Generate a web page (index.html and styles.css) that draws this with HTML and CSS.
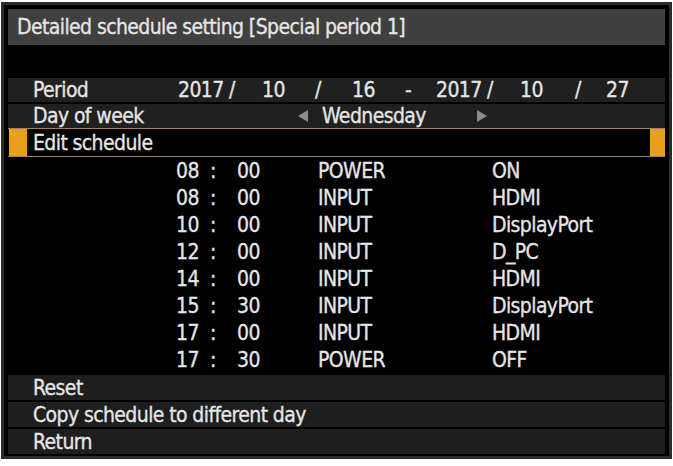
FILE: index.html
```html
<!DOCTYPE html>
<html lang="en">
<head>
<meta charset="utf-8">
<title>Detailed schedule setting</title>
<link rel="stylesheet" href="styles.css">
</head>
<body>
<div class="screen">
  <div class="title">Detailed schedule setting [Special period 1]</div>

  <div class="menu">
    <div class="row period">
      <span class="label">Period</span>
      <span>2017 /</span>
      <span>10</span>
      <span>/</span>
      <span>16</span>
      <span>-</span>
      <span>2017 /</span>
      <span>10</span>
      <span>/</span>
      <span>27</span>
    </div>

    <div class="row day">
      <span class="label">Day of week</span>
      <svg class="arrow" width="10" height="12" viewBox="0 0 10 12"><polygon points="10,0 10,12 0,6"/></svg>
      <span>Wednesday</span>
      <svg class="arrow" width="10" height="12" viewBox="0 0 10 12"><polygon points="0,0 0,12 10,6"/></svg>
    </div>

    <div class="row edit">
      <span class="mark"></span>
      <span class="label">Edit schedule</span>
      <span class="mark mark-right"></span>
    </div>

    <div class="schedule">
      <div class="slot"><span>08</span><span>:</span><span>00</span><span>POWER</span><span>ON</span></div>
      <div class="slot"><span>08</span><span>:</span><span>00</span><span>INPUT</span><span>HDMI</span></div>
      <div class="slot"><span>10</span><span>:</span><span>00</span><span>INPUT</span><span>DisplayPort</span></div>
      <div class="slot"><span>12</span><span>:</span><span>00</span><span>INPUT</span><span>D_PC</span></div>
      <div class="slot"><span>14</span><span>:</span><span>00</span><span>INPUT</span><span>HDMI</span></div>
      <div class="slot"><span>15</span><span>:</span><span>30</span><span>INPUT</span><span>DisplayPort</span></div>
      <div class="slot"><span>17</span><span>:</span><span>00</span><span>INPUT</span><span>HDMI</span></div>
      <div class="slot"><span>17</span><span>:</span><span>30</span><span>POWER</span><span>OFF</span></div>
    </div>

    <div class="row action first"><span class="label">Reset</span></div>
    <div class="row action"><span class="label">Copy schedule to different day</span></div>
    <div class="row action"><span class="label">Return</span></div>
  </div>
</div>
</body>
</html>
```

FILE: styles.css
```css
html, body {
  margin: 0;
  padding: 0;
  background: #ffffff;
}

body {
  font-family: "DejaVu Sans Condensed", "DejaVu Sans", sans-serif;
  font-size: 21px;
  letter-spacing: -0.6px;
  color: #e6e6e6;
  -webkit-text-stroke: 0.3px #e6e6e6;
}

.screen {
  box-sizing: border-box;
  width: 671px;
  height: 457px;
  margin: 2px 0 0 1px;
  border: 3px solid #2c2c2c;
  background: #000;
  padding: 4px 4px 2px 4px;
  display: flex;
  flex-direction: column;
}

.title {
  height: 36px;
  line-height: 36px;
  padding-left: 9px;
  background: #404040;
  white-space: nowrap;
}

.menu {
  margin-top: 33px;
  display: flex;
  flex-direction: column;
}

.row {
  height: 24px;
  background: #202020;
  display: flex;
  align-items: center;
  padding-left: 25px;
  white-space: nowrap;
}

.period {
  display: grid;
  grid-template-columns: 145px 84px 53px 37px 53px 31px 84px 55px 31px auto;
  align-items: center;
}

.day {
  margin-top: 2px;
}

.day .label {
  width: 265px;
}

.day span:not(.label) {
  width: 155px;
}

.arrow {
  fill: #8c8c8c;
  width: 10px;
  margin-right: 14px;
}

.edit {
  height: 27px;
  background: #000;
  border-top: 1px solid #a0805e;
  border-bottom: 1px solid #a0805e;
  padding-left: 1px;
}

.mark {
  align-self: stretch;
  width: 18px;
  background: #e9a11c;
  border-right: 2px solid #1a1208;
  margin-right: 4px;
}

.edit .label {
  flex: 1;
}

.mark-right {
  width: 15px;
  border-right: 0;
  margin: 0;
}

.schedule {
  display: flex;
  flex-direction: column;
  padding-left: 168px;
}

.slot {
  height: 27px;
  display: grid;
  grid-template-columns: 34px 27px 81px 174px auto;
  align-items: center;
  white-space: nowrap;
}

.action {
  height: 25px;
  margin-top: 2px;
  background: #1e1e1e;
}
```
